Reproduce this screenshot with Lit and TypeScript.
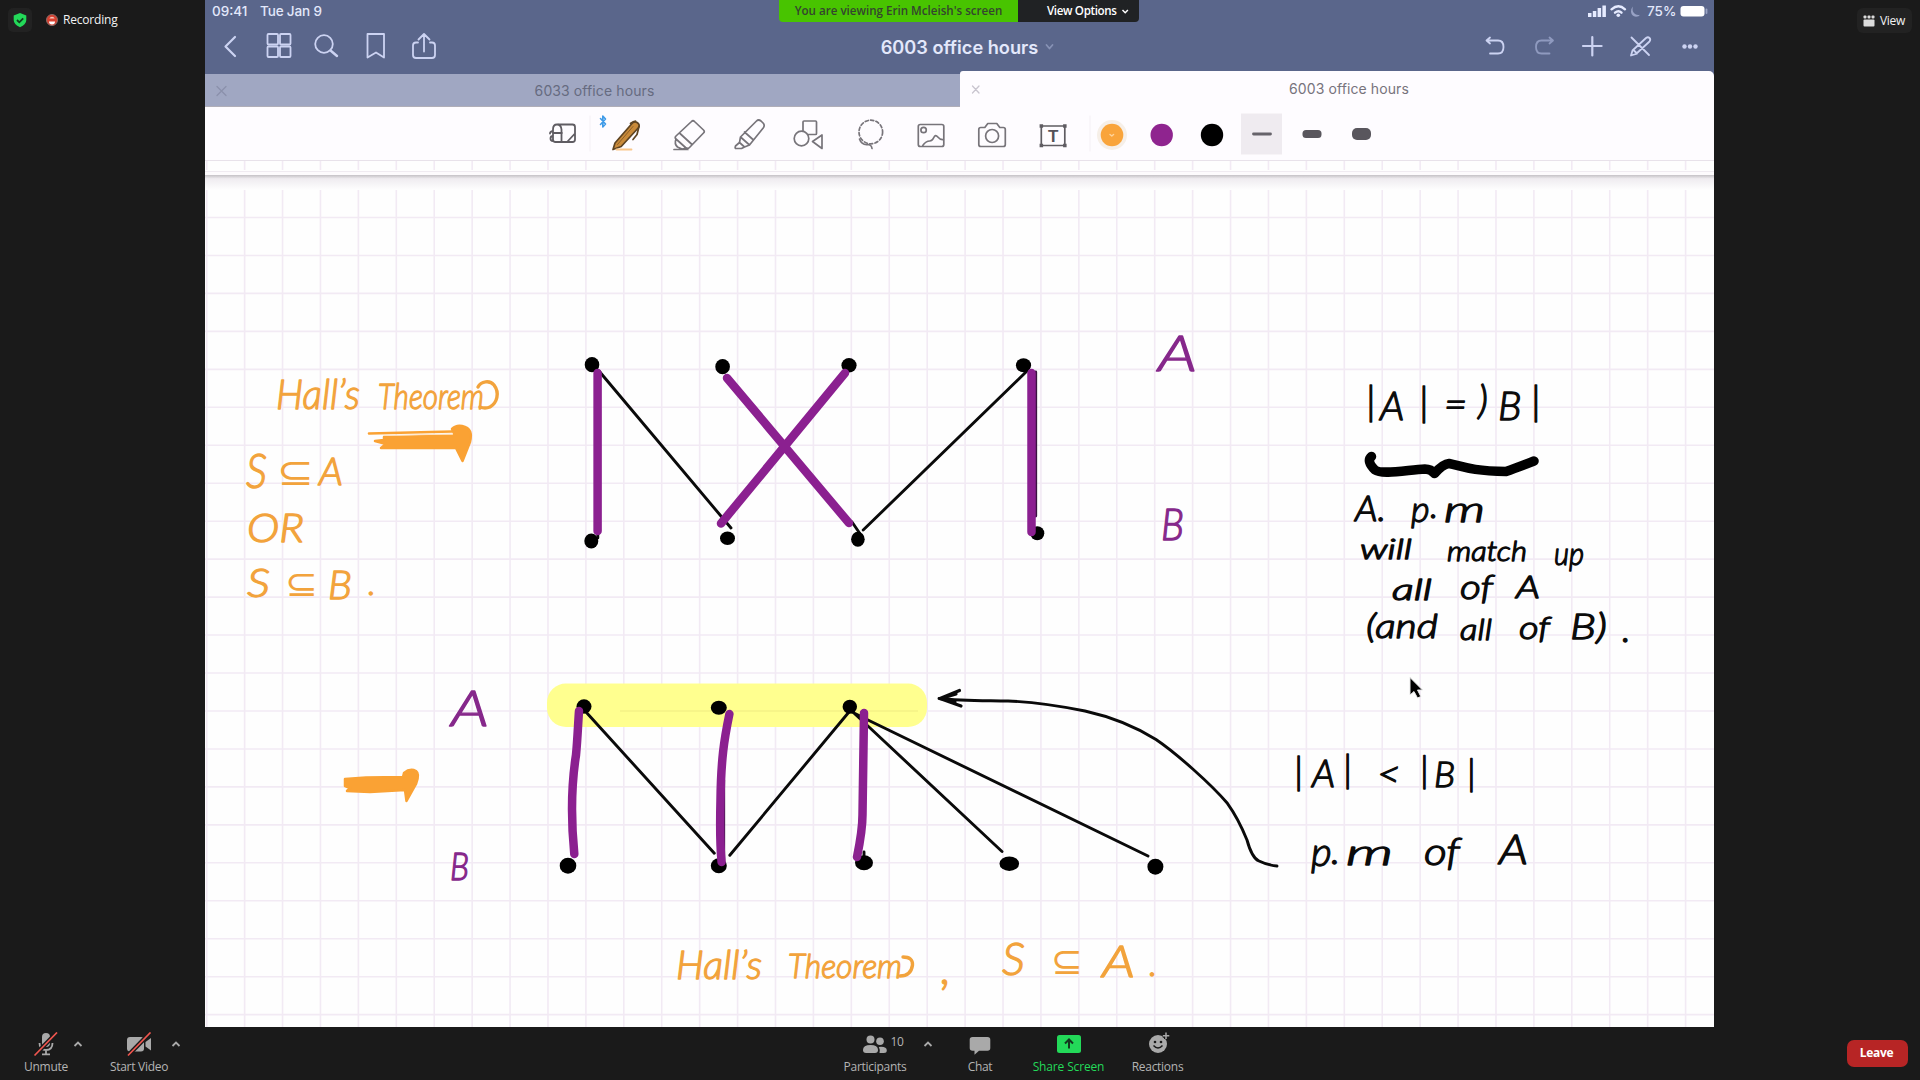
import { LitElement, html, svg, css } from "lit";
import { customElement } from "lit/decorators.js";

/** An icon slot: the view box is the slot's own area of the window. */
const icon = (x: number, y: number, w: number, h: number, body: unknown) =>
  html`<svg class="ic" width=${w} height=${h} viewBox="${x} ${y} ${w} ${h}">${body}</svg>`;

@customElement("tablet-header")
class TabletHeader extends LitElement {
  static styles = css`
    :host { display: block; background: #5a668b; color: #e3e8fb; font-family: Inter, "Liberation Sans", sans-serif; }
    .ic { display: block; flex: none; fill: none; stroke: #ccd3f2; stroke-width: 1.8; stroke-linecap: round; stroke-linejoin: round; }
    .status { display: flex; height: 22px; align-items: center; font-size: 13.5px; font-weight: 500; padding-left: 7px; }
    .clock { width: 48px; }
    .date { letter-spacing: -0.15px; }
    .sys { margin-left: auto; display: flex; align-items: center; }
    .pct { width: 31px; font-size: 13.5px; }
    .nav { display: grid; grid-template-columns: 1fr auto 1fr; height: 49px; align-items: center; }
    .side { display: flex; }
    .right { justify-content: flex-end; }
    .title { display: flex; align-items: center; padding-left: 22px; font-size: 18.2px; font-weight: 600; white-space: nowrap; }
    .tabs { display: flex; height: 36px; align-items: flex-end; }
    .tab { box-sizing: border-box; display: flex; align-items: center; font-size: 14px; }
    .old { width: 755px; height: 33px; background: #a0a7c2; color: #666b80; border-bottom: 1px solid #b0aeb8; }
    .cur { flex: 1; height: 36px; background: #fefcff; color: #77737c; border-radius: 3px 5px 0 0; }
    .name { flex: 1; text-align: center; padding-right: 8px; letter-spacing: 0.1px; }
    .cur .name { margin-top: -1px; }
  `;
  render() {
    return html`
      <div class="status">
        <span class="clock">09:41</span><span class="date">Tue Jan 9</span>
        <div class="sys">
          ${icon(1587, 0, 60, 22, svg`
            <g stroke="none" fill="#e6ebff"><rect x="1588" y="13" width="3.500" height="4"/><rect x="1592.800" y="11" width="3.500" height="6"/><rect x="1597.600" y="8" width="3.500" height="9"/><rect x="1602.400" y="5.500" width="3.500" height="11.500"/></g>
            <g stroke="#e6ebff" stroke-width="2.400"><path d="M1611.500 9.300q7-6 13.500 0M1615 12.700q3.500-3 6.500 0"/></g><circle cx="1618.300" cy="15.300" r="1.800" fill="#e6ebff" stroke="none"/>
            <path d="M1633 6.500q-1.500 5 2 7.500 2.500 1.500 5 .8-1 2-4 2-4.500-.5-5-5 0-3.500 2-5.300z" stroke="none" fill="#98a2c5"/>`)}
          <span class="pct">75%</span>
          ${icon(1678, 0, 36, 22, svg`<rect x="1680.500" y="6" width="24" height="10.500" rx="3" stroke="none" fill="#fff"/><path d="M1706.500 9.500v3.500" stroke="#9aa4c5"/>`)}
        </div>
      </div>
      <div class="nav">
        <div class="side">
          ${icon(205, 23, 49, 49, svg`<path d="M235 38l-9.500 9.500 9.500 9.500" stroke-width="2.200"/>`)}
          ${icon(254, 23, 49, 49, svg`<rect x="267.500" y="35" width="10.500" height="10.500" rx="1"/><rect x="280" y="35" width="10.500" height="10.500" rx="1"/><rect x="267.500" y="47.500" width="10.500" height="10.500" rx="1"/><rect x="280" y="47.500" width="10.500" height="10.500" rx="1"/>`)}
          ${icon(303, 23, 49, 49, svg`<circle cx="324" cy="45" r="8.800"/><path d="M330.500 51.500l6.500 5.500" stroke-width="2.400"/>`)}
          ${icon(352, 23, 49, 49, svg`<path d="M367.500 35h16.500v23.500l-8-5-8.500 5z"/>`)}
          ${icon(401, 23, 49, 49, svg`<path d="M418 43.500h-2q-3 0-3 3v9.500q0 3 3 3h16q3 0 3-3v-9.500q0-3-3-3h-2M424 52.500v-17M418.500 40.500l5.500-5.500 5.500 5.500"/>`)}
        </div>
        <div class="title">6003 office hours ${icon(1040, 37, 22, 22, svg`<path d="M1048.500 46l3 3.500 3-3.500" stroke="#8792b5"/>`)}</div>
        <div class="side right">
          ${icon(1469, 23, 49, 49, svg`<path d="M1487 41.500h11q5.500 0 5.500 6.500t-5.500 6.500h-8M1490 38.500l-3.500 3 3.500 3"/>`)}
          ${icon(1518, 23, 49, 49, svg`<path stroke="#8f9abf" d="M1552.500 41.500h-11q-5.500 0-5.500 6.500t5.500 6.500h8M1549.500 38.500l3.500 3-3.500 3"/>`)}
          ${icon(1567, 23, 49, 49, svg`<path d="M1592.300 38v18.500M1583 47h18.600" stroke-width="2.200"/>`)}
          ${icon(1616, 23, 49, 49, svg`<path d="M1631.500 38.500l17.500 17.500M1631 56.500l1.500-5 13.500-12.500q2-1.500 3.500 0t0 3.500l-13.500 12.500zM1633.500 51l3.500 3.500"/>`)}
          ${icon(1665, 23, 49, 49, svg`<g stroke="none" fill="#ccd3f2"><circle cx="1684.500" cy="47.500" r="2.200"/><circle cx="1690" cy="47.500" r="2.200"/><circle cx="1695.500" cy="47.500" r="2.200"/></g>`)}
        </div>
      </div>
      <div class="tabs">
        <div class="tab old">${icon(205, 74, 32, 32, svg`<path stroke="#8b91ab" stroke-width="1.300" d="M217 86.500l9 9M226 86.500l-9 9"/>`)}<span class="name">6033 office hours</span></div>
        <div class="tab cur">${icon(960, 73, 32, 32, svg`<path stroke="#c9c5cf" stroke-width="1.300" d="M972.500 86l6.500 7M979 86l-6.500 7"/>`)}<span class="name">6003 office hours</span></div>
      </div>
    `;
  }
}

@customElement("pen-toolbar")
class PenToolbar extends LitElement {
  static styles = css`
    :host { display: flex; box-sizing: border-box; height: 54px; padding-left: 329.5px; background: #fefcff; border-bottom: 1px solid #e8e2ea; }
    .ic { display: block; flex: none; fill: none; stroke: #77747a; stroke-width: 1.7; stroke-linecap: round; stroke-linejoin: round; }
    .colours { display: flex; margin-left: 3.5px; }
    .tletter { font: 700 17px "Liberation Sans", sans-serif; fill: #555259; stroke: none; }
  `;
  render() {
    return html`
      ${icon(534.5, 107, 61, 53, svg`<path stroke="#5f5c62" stroke-width="1.800" d="M557.500 124.500h14.500q2.500 0 2.500 2.500v12.500q0 2.500-2.500 2.500h-17q-2.500 0-2.500-2.500v-10q0-5 4-5t4.500 5v12M552.500 133h9M574 134l-7 7.500M552.500 131q-3 .5-3 2.500M552.500 136q-2.500 0-2.500 2.500t2.500 2.500"/><path d="M589.500 116v35" stroke="#f4f0f5" stroke-width="1"/>`)}
      ${icon(595.5, 107, 61, 53, svg`<path stroke="#3f9be8" stroke-width="1.600" d="M600 118.500l5 5.500-2.700 3v-11l2.700 3-5 5.500"/>
        <path d="M612.500 149.500l2-6.500 17-19.500q2.500-3 5.500-.8t.7 5.300l-17 18.500z" fill="#c98a3a" stroke="#5d4322" stroke-width="1.700"/><path d="M630 123.500q3-2.500 5-2.500M638.500 126.500l-2 8-4 5" stroke="#5d4322"/><path d="M617 144.500l15.500-18" stroke="#8d5f27" stroke-width="1"/><path d="M616 149.500h15" stroke="#f9c68a" stroke-width="1.800"/>`)}
      ${icon(656.5, 107, 61, 53, svg`<path d="M691 121.500q1.500-1.500 3 0l9 8.500q1.500 1.500 0 3l-14 14.500q-2 2-4 0l-9.500-8.500q-1.500-1.500 0-3zM679.500 133.500l12 11M675.500 139q-2 5 1.500 8l4.500 2 5-1M673.500 149.500h14"/>`)}
      ${icon(717.5, 107, 61, 53, svg`<path d="M756 121q2-2 4.500 0l2.500 2.500q1.500 2-.3 4.500l-13.700 17-9-8zM740 137l-1 5.500 5 4.500 5-2M739 142.500l-4 3.500q-1 2.500.8 2.500h5.200l3-1.500M744 132l9 8"/>`)}
      ${icon(778.5, 107, 61, 53, svg`<rect x="802.500" y="121" width="13.500" height="13.500" rx="1"/><circle cx="801" cy="138.500" r="7.300" fill="#fefcff"/><path d="M821.500 135v13.500l-9.500-7z"/>`)}
      ${icon(839.5, 107, 61, 53, svg`<circle cx="870.300" cy="132" r="11.800" stroke-dasharray="3.200 2.300"/><path d="M859 139q2 6 8 5.500 4 0 4.500 4"/>`)}
      ${icon(900.5, 107, 61, 53, svg`<g transform="translate(-0.700 0)"><rect x="918.500" y="124.500" width="25.500" height="22" rx="2"/><circle cx="923.800" cy="130" r="2.700"/><path d="M923 145.500q3-4.500 7-4.500 2.500 0 4-3.500t4-.5 5.500 2.500"/></g>`)}
      ${icon(961.5, 107, 61, 53, svg`<g transform="translate(-0.700 0)"><path d="M981 127.500h4l3-4h9l3 4h3.500q2 0 2 2v15q0 2-2 2h-22.500q-2 0-2-2v-15q0-2 2-2z"/><circle cx="992.300" cy="136" r="6.500"/></g>`)}
      ${icon(1022.5, 107, 61, 53, svg`<g transform="translate(-0.700 0)"><g stroke="#5f5c62"><rect x="1041.500" y="126" width="23.500" height="19.500"/><path stroke-width="3.400" stroke-linecap="square" d="M1041.500 126h.1M1065 126h.1M1041.500 145.500h.1M1065 145.500h.1"/></g><text class="tletter" x="1048.100" y="142">T</text></g>`)}
      <div class="colours">
        ${icon(1087, 107, 50, 53, svg`<path d="M1090 116v35" stroke="#f4f0f5" stroke-width="1"/><circle cx="1112" cy="135" r="15" fill="#f6efe8" stroke="none"/><circle cx="1112" cy="135" r="11.300" fill="#f9a43b" stroke="none"/><path d="M1110 134.500l1.800 1.500 1.800-1.500" stroke="#ffd39a" stroke-width="1.400"/>`)}
        ${icon(1137, 107, 50, 53, svg`<circle cx="1161.700" cy="135" r="11.200" fill="#8f248f" stroke="none"/>`)}
        ${icon(1187, 107, 50, 53, svg`<circle cx="1212" cy="135" r="11.200" fill="#000" stroke="none"/>`)}
        ${icon(1237, 107, 50, 53, svg`<rect x="1241" y="113.500" width="41" height="41" fill="#efebf0" stroke="none"/><path d="M1253.500 134h17" stroke="#66636a" stroke-width="2.800"/>`)}
        ${icon(1287, 107, 50, 53, svg`<rect x="1302.500" y="130" width="19" height="8" rx="3.500" fill="#59565d" stroke="none"/>`)}
        ${icon(1337, 107, 50, 53, svg`<rect x="1352" y="128" width="19" height="12" rx="5" fill="#59565d" stroke="none"/>`)}
      </div>
    `;
  }
}

/** A handwritten note: a stretched word (w), or a run with one position per glyph (xs, ys). */
type Note = { t: string; x: number; y: number; s: number; w?: number; xs?: string; ys?: string };

const ORANGE: Note[] = [
  { t: "Hall’s", x: 276, y: 409, s: 41, w: 84 },
  { t: "Theorem", x: 378, y: 409, s: 36, w: 106 },
  { t: "S", x: 246, y: 488, s: 47, w: 21 },
  { t: "⊆", x: 277, y: 485, s: 38, w: 37 },
  { t: "A", x: 319, y: 485, s: 38, w: 24 },
  { t: "OR", x: 247, y: 542, s: 39, w: 57 },
  { t: "S", x: 247, y: 597, s: 40, w: 23 },
  { t: "⊆", x: 285, y: 596, s: 36, w: 33 },
  { t: "B", x: 328, y: 599, s: 40, w: 24 },
  { t: ".", x: 368, y: 595, s: 34 },
  { t: "Hall’s", x: 676, y: 979, s: 39, w: 86 },
  { t: "Theorem", x: 788, y: 978, s: 34, w: 114 },
  { t: ",", x: 941, y: 984, s: 48 },
  { t: "S", x: 1002, y: 975, s: 46, w: 23 },
  { t: "⊆", x: 1051, y: 974, s: 38, w: 32 },
  { t: "A", x: 1102, y: 977, s: 44, w: 33 },
  { t: ".", x: 1149, y: 976, s: 36 },
];
const PURPLE: Note[] = [
  { t: "A", x: 1158, y: 371, s: 49, w: 39 },
  { t: "B", x: 1161, y: 540, s: 43, w: 23 },
  { t: "A", x: 451, y: 726, s: 50, w: 38 },
  { t: "B", x: 450, y: 880, s: 38, w: 19 },
];
const BLACK: Note[] = [
  { t: "|A|=)B|", x: 0, y: 0, s: 40, xs: "1366 1380 1419 1444 1478 1498 1531", ys: "415 420 416 418 414 420 415" },
  { t: "A.", x: 1355, y: 521, s: 35, w: 31 },
  { t: "p.", x: 0, y: 0, s: 36, xs: "1411 1430", ys: "522 518" },
  { t: "m", x: 1444, y: 522, s: 35, w: 41 },
  { t: "will", x: 1360, y: 559, s: 28, w: 52 },
  { t: "match", x: 1447, y: 561, s: 28, w: 80 },
  { t: "up", x: 1554, y: 565, s: 31, w: 30 },
  { t: "all", x: 1392, y: 600, s: 29, w: 40 },
  { t: "of", x: 1460, y: 599, s: 33, w: 33 },
  { t: "A", x: 1516, y: 598, s: 32, w: 24 },
  { t: "(and", x: 1366, y: 638, s: 33, w: 72 },
  { t: "all", x: 1460, y: 640, s: 29, w: 32 },
  { t: "of", x: 1519, y: 639, s: 32, w: 31 },
  { t: "B)", x: 1570, y: 639, s: 36, w: 37 },
  { t: ".", x: 1622, y: 642, s: 38 },
  { t: "|A|", x: 0, y: 0, s: 38, xs: "1294 1312 1343", ys: "784 787 782" },
  { t: "<", x: 1377, y: 787, s: 38, w: 24 },
  { t: "|B|", x: 0, y: 0, s: 36, xs: "1420 1434 1467", ys: "783 787 786" },
  { t: "p.", x: 0, y: 0, s: 40, xs: "1311 1331", ys: "866 864" },
  { t: "m", x: 1346, y: 865, s: 36, w: 47 },
  { t: "of", x: 1424, y: 865, s: 37, w: 36 },
  { t: "A", x: 1499, y: 864, s: 42, w: 29 },
];

@customElement("note-page")
class NotePage extends LitElement {
  static styles = css`
    :host { display: block; background: #fefefe; }
    .page { display: block; }
    .grid { stroke: #f2eaf4; stroke-width: 1.6; }
    .hand { font-family: Lato, "DejaVu Sans", sans-serif; font-style: italic; font-weight: 300; stroke-width: 1.3; stroke-linejoin: round; }
    .orange { fill: #f2a33c; stroke: #f2a33c; }
    .purple { fill: #86288b; stroke: #86288b; }
    .ink { fill: #0b0b0b; stroke: #0b0b0b; }
    .symbol { stroke: none; }
    .flick { fill: none; stroke: #f2a33c; stroke-width: 3.4; stroke-linecap: round; }
    .thin { stroke: #0a0a0a; stroke-width: 2.9; fill: none; stroke-linecap: round; stroke-linejoin: round; }
    .match { stroke: #8b2090; stroke-width: 8.5; fill: none; stroke-linecap: round; }
    .brace { stroke: #000; stroke-width: 9.5; fill: none; stroke-linecap: round; stroke-linejoin: round; }
  `;
  private write(notes: Note[], tone: string) {
    return notes.map((n) => {
      const cls = `hand ${tone}${n.t === "⊆" ? " symbol" : ""}`;
      if (n.xs) return svg`<text class=${cls} font-size=${n.s} x=${n.xs} y=${n.ys}>${n.t}</text>`;
      if (n.w) return svg`<text class=${cls} font-size=${n.s} x=${n.x} y=${n.y} textLength=${n.w} lengthAdjust="spacingAndGlyphs">${n.t}</text>`;
      return svg`<text class=${cls} font-size=${n.s} x=${n.x} y=${n.y}>${n.t}</text>`;
    });
  }
  render() {
    const cols = Array.from({ length: 40 }, (_, i) => 206.7 + i * 37.92);
    const rows = Array.from({ length: 22 }, (_, i) => 217.5 + i * 37.96);
    const dots = [
      [592, 364.7, 7.3, 7.6], [722.6, 366.7, 7.3, 7.6], [849, 365.3, 7.6, 7.3], [1023.5, 365.3, 7.6, 7],
      [591.3, 541, 7, 7.5], [727.5, 538.3, 7.5, 6.8], [857.9, 539.3, 6.8, 7.5], [1037.3, 533.3, 7, 7],
      [584, 706.5, 7.5, 7.2], [718.8, 707.7, 8, 7], [849.8, 706.7, 7.2, 7],
      [568, 865.7, 8.3, 8], [718.8, 865.7, 8, 7.5], [864, 862.7, 9, 7.5], [1009.3, 863.7, 9.8, 7.2], [1155.4, 866.7, 8, 8],
    ];
    return html`
      <svg class="page" width="1509" height="866" viewBox="205 161 1509 866">
        <defs>
          <linearGradient id="shade" x1="0" y1="0" x2="0" y2="1">
            <stop offset="0" stop-color="#c4c1c5"/><stop offset="0.250" stop-color="#efecf0"/><stop offset="1" stop-color="#fefefe"/>
          </linearGradient>
        </defs>
        <g class="grid">
          ${cols.map((x) => svg`<path d="M${x} 161V170M${x} 184V1027"/>`)}
          ${rows.map((y) => svg`<path d="M205 ${y}H1714"/>`)}
        </g>
        <rect x="205" y="171" width="1509" height="4" fill="#fdfbfd"/>
        <path d="M205 171.500H1714" stroke="#f0ebf1" stroke-width="1"/>
        <rect x="205" y="175" width="1509" height="15" fill="url(#shade)"/>
        <rect x="547" y="683.500" width="380" height="43.500" rx="19" fill="#ffff8f"/>
        <path d="M620 711H918" stroke="#f4f286" stroke-width="1.300"/>
        <g class="thin">
          <path d="M599 371L731 528M1027 371L863.200 530M852 522L859.500 533M597.800 529v9"/>
          <path d="M586 712L714.300 853.300M849.800 711L729.800 855.300M850.600 710L869 727L1002 851.500M852 712L870 721L1148 856"/>
          <path d="M864 852v8"/>
          <path d="M1035.700 372V516M723.700 780V860" stroke="#3a1440"/>
          <path d="M939 698.500C962 701 985 700.500 1008 701C1035 702 1060 706 1085 711C1112 717 1136 727 1156 739.500C1176 753 1211 784 1227.400 803.300C1238 818 1243 830 1247 840C1250 851 1254 859 1259 861Q1267 865 1277 866"/>
          <path d="M959.500 690.500L940 698.500L961 706M941 698.500L956 694M945 700l10 2" stroke-width="3.200"/>
        </g>
        ${dots.map(([x, y, a, b]) => svg`<ellipse cx=${x} cy=${y} rx=${a} ry=${b} fill="#000"/>`)}
        <g class="match">
          <path d="M597.600 373V531M727 378L849 523M845 373L721 523.500M1031.500 373V532"/>
          <path d="M579 711C578 725 577.500 740 576 755Q569 800 574.300 854M729.400 714C724 740 721 760 720.500 800Q719.500 840 721.600 862M864 713L862.500 815Q862.500 830 857 857"/>
        </g>
        <g fill="#faa234" stroke="#faa234" stroke-width="2.500" stroke-linejoin="round" stroke-linecap="round">
          <path d="M384 437L455 435.500L452 429Q457 424 465 427Q473 430 470 442L462.500 461L456 448L381 448L386 444L375 441L384 440Z"/>
          <path d="M369 433.500L452 431.500" stroke-width="2.600"/><path d="M384 435.500L452 434" stroke="#fde3c4" stroke-width="1"/>
          <path d="M345 779L366 777.500L403 777L404 773Q410 768 416 771Q420 774 416 784L406.500 801L405 790L370 792L347 791L350 788L345 786Z"/>
        </g>
        <path class="brace" d="M1371.500 456.500Q1366 461 1375 470C1382 475 1407 470 1425 469Q1431 469 1434.500 473.500Q1443 464 1449 463.500C1462 466 1470 471 1506 471.500Q1516 468 1534 461"/>
        ${this.write(ORANGE, "orange")} ${this.write(PURPLE, "purple")} ${this.write(BLACK, "ink")}
        <path class="flick" d="M478 387C481 381 490 380 494 385C500 393 497 403 490 407Q485 409 480 407"/>
        <path class="flick" d="M903 957Q913 957 912.500 965Q911 976 900 976"/>
        <path d="M1410 677.500V695L1414 691.500L1417.500 698L1420.800 696.500L1417.500 690H1422.500Z" fill="#000" stroke="#e8e8e8" stroke-width="1"/>
      </svg>
    `;
  }
}

@customElement("meeting-bar")
class MeetingBar extends LitElement {
  static styles = css`
    :host { display: flex; height: 53px; background: #1a1a1a; color: #b4b4b4; font: 12px "Open Sans", "Noto Sans", sans-serif; }
    .ic { display: block; flex: none; fill: #a9a9a9; }
    .cell { display: flex; flex-direction: column; align-items: center; padding-top: 5px; white-space: nowrap; flex: none; }
    .label { line-height: 16px; margin-top: 1px; letter-spacing: -0.28px; }
    .group { display: flex; box-sizing: border-box; }
    .left { width: 844px; padding-left: 24px; }
    .unmute { width: 44px; } .video { width: 60px; margin-left: 21px; }
    .people { width: 62px; } .chat { width: 60px; } .share { width: 117px; color: #23d959; } .react { width: 61px; }
    .share .label { letter-spacing: -0.15px; }
    .chev { fill: none; stroke: #a9a9a9; stroke-width: 1.8; }
    .num { font-size: 12px; fill: #b4b4b4; letter-spacing: -0.3px; }
    .leave { box-sizing: border-box; margin: 13px 12px 0 auto; padding-right: 2px; width: 61px; height: 27px; border-radius: 7px; background: #b72525; color: #fff; font-weight: 700; font-size: 12px; letter-spacing: -0.3px; line-height: 25px; text-align: center; }
  `;
  private chev(x: number, w: number, c: number) {
    return icon(x, 1027, w, 34, svg`<path class="chev" d="M${c - 3.5} 1046l3.500-3.500 3.500 3.500"/>`);
  }
  render() {
    return html`
      <div class="group left">
        <div class="cell unmute">
          ${icon(24, 1032, 44, 26, svg`<rect x="42" y="1033" width="8" height="14" rx="4"/><path d="M39.500 1043q0 7 6.500 7t6.500-7M46 1050v4M42 1054.300h8" fill="none" stroke="#a9a9a9" stroke-width="1.800"/><path d="M34.500 1055.500L57 1032.500" stroke="#1a1a1a" stroke-width="4.500"/><path d="M34.500 1055.500L57 1032.500" stroke="#f0564f" stroke-width="1.700"/>`)}
          <span class="label">Unmute</span>
        </div>
        ${this.chev(68, 20, 78)}
        <div class="cell video">
          ${icon(109, 1032, 60, 26, svg`<rect x="127" y="1037" width="17" height="14.500" rx="3"/><path d="M145.500 1042l5.500-4v12.500l-5.500-4z"/><path d="M128 1055.500L150.500 1032.500" stroke="#1a1a1a" stroke-width="4.500"/><path d="M128 1055.500L150.500 1032.500" stroke="#f0564f" stroke-width="1.700"/>`)}
          <span class="label">Start Video</span>
        </div>
        ${this.chev(169, 16, 176)}
      </div>
      <div class="group">
        <div class="cell people">
          ${icon(844, 1032, 62, 26, svg`<circle cx="870.500" cy="1039.500" r="4"/><path d="M863 1050q0-5 7.500-5t7.500 5q0 3-3 3h-9q-3 0-3-3z"/><circle cx="880" cy="1041.300" r="3.800"/><path d="M879.500 1053q.8-3.500-.7-6 8-.8 8 3.500 0 2.500-3 2.500z"/><text class="num" x="890.500" y="1046">10</text>`)}
          <span class="label">Participants</span>
        </div>
        ${this.chev(906, 44, 928)}
        <div class="cell chat">
          ${icon(950, 1032, 60, 26, svg`<path d="M972.500 1037h15q2.800 0 2.800 2.800v8.200q0 2.800-2.800 2.800h-8.500l-4.500 4v-4h-2q-2.800 0-2.800-2.800v-8.200q0-2.800 2.800-2.800z"/>`)}
          <span class="label">Chat</span>
        </div>
        <div class="cell share">
          ${icon(1010, 1032, 117, 26, svg`<rect x="1057" y="1035" width="24" height="18" rx="2.500" fill="#23d959"/><path d="M1069 1048.500v-8M1065 1043.500l4-4 4 4" fill="none" stroke="#14361f" stroke-width="2"/>`)}
          <span class="label">Share Screen</span>
        </div>
        <div class="cell react">
          ${icon(1127, 1032, 61, 26, svg`<circle cx="1158" cy="1044" r="9"/><circle cx="1155" cy="1042" r="1.300" fill="#1a1a1a"/><circle cx="1161" cy="1042" r="1.300" fill="#1a1a1a"/><path d="M1153.500 1045.500q4.500 5 9 0" fill="none" stroke="#1a1a1a" stroke-width="1.500"/><path d="M1166 1032.500v6.500M1162.800 1035.700h6.500" stroke="#1a1a1a" stroke-width="4"/><path d="M1166 1032.500v6.500M1162.800 1035.700h6.500" stroke="#a9a9a9" stroke-width="1.500"/>`)}
          <span class="label">Reactions</span>
        </div>
      </div>
      <div class="leave">Leave</div>
    `;
  }
}

@customElement("app-root")
class AppRoot extends LitElement {
  static styles = css`
    :host { display: block; width: 1920px; height: 1080px; overflow: hidden; background: #1a1a1a; font: 12px "Open Sans", "Noto Sans", sans-serif; color: #f2f2f2; }
    .stage { position: relative; display: grid; grid-template-columns: 205px 1509px 206px; height: 1027px; }
    .edge { display: flex; align-items: flex-start; padding-top: 8px; }
    .edge:first-child { padding-left: 8px; }
    .shared { min-width: 0; }
    .ic { display: block; flex: none; }
    .badge { width: 24px; height: 24px; border-radius: 5px; background: #222; }
    .rec { display: flex; height: 24px; align-items: center; margin-left: 14px; gap: 5px; }
    .rec span { letter-spacing: -0.2px; padding-bottom: 1px; }
    .view { margin-left: auto; margin-right: 8px; width: 55px; height: 25px; border-radius: 6px; background: #222; display: flex; align-items: center; box-sizing: border-box; padding-left: 6px; gap: 5px; }
    .view span { letter-spacing: -0.3px; padding-bottom: 1px; }
    .banner { position: absolute; left: 779px; top: 0; width: 360px; height: 22px; display: flex; border-radius: 0 0 4px 4px; overflow: hidden; font-weight: 600; font-size: 11.6px; line-height: 22px; }
    .who { flex: none; width: 239px; text-align: center; background: #48c400; color: #34452f; white-space: nowrap; }
    .opts { flex: none; box-sizing: border-box; width: 121px; background: #202224; color: #fff; padding-left: 29px; display: flex; align-items: center; white-space: nowrap; }
    .opts span { width: 69px; letter-spacing: -0.35px; }
  `;
  render() {
    return html`
      <div class="stage">
        <div class="edge">
          <div class="badge">${icon(8, 8, 24, 24, svg`<path d="M20 13l6.300 2.600v4.400q0 4.500-6.300 7.200-6.300-2.700-6.300-7.200v-4.400z" fill="#23d959"/><path d="M17 20l2.300 2.300 3.900-4" fill="none" stroke="#123d1e" stroke-width="1.800"/>`)}</div>
          <div class="rec">${icon(46, 14, 12, 12, svg`<circle cx="52" cy="20" r="5.500" fill="#d8402f" stroke="#8a6a66" stroke-width="1"/><path d="M49.300 18.500a3 3 0 0 1 5.400 0z" fill="#f7c5bd"/><path d="M49 21.500h6a3 3 0 0 1-6 0z" fill="#fff"/>`)}<span>Recording</span></div>
        </div>
        <div class="shared"><tablet-header></tablet-header><pen-toolbar></pen-toolbar><note-page></note-page></div>
        <div class="edge">
          <div class="view">${icon(1863, 14, 12, 12, svg`<g fill="#dcdcdc"><rect x="1863.500" y="14.500" width="3" height="3" rx="1"/><rect x="1867.500" y="14.500" width="3" height="3" rx="1"/><rect x="1871.500" y="14.500" width="3" height="3" rx="1"/><rect x="1863.500" y="18.500" width="11" height="7" rx="1"/></g>`)}<span>View</span></div>
        </div>
        <div class="banner"><div class="who">You are viewing Erin Mcleish's screen</div>
          <div class="opts"><span>View Options</span>${icon(1116, 0, 20, 22, svg`<path d="M1122.500 10l2.700 2.700 2.700-2.700" fill="none" stroke="#fff" stroke-width="1.500"/>`)}</div></div>
      </div>
      <meeting-bar></meeting-bar>
    `;
  }
}
